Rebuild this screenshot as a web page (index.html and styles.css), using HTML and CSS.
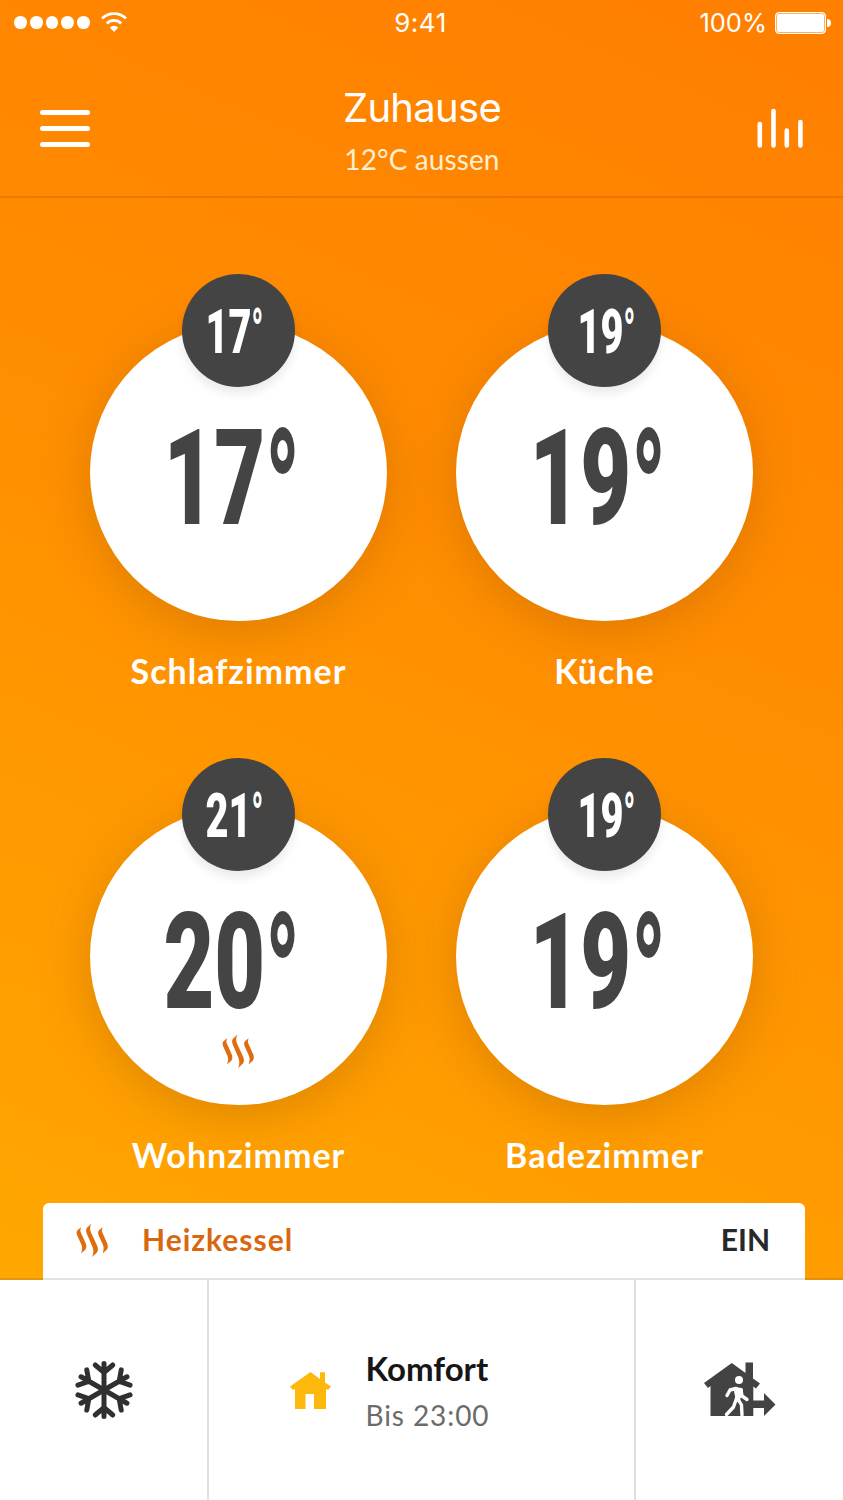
FILE: index.html
```
<!DOCTYPE html>
<html lang="de">

<head>
    <meta charset="UTF-8">
    <meta name="viewport" content="width=device-width, initial-scale=1.0">
    <title>Zuhause</title>
    <link rel="stylesheet" href="styles.css">
</head>

<body>
    <!-- Shared steam icon -->
    <svg width="0" height="0" class="defs">
        <symbol id="steam" viewBox="0 0 33 35">
            <path id="wisp" d="M5 4.300L1.200 7.500Q0 9 1 12L5.500 22Q7 26 5 30.500L9.500 26.500Q11 24.500 10 21L5.500 11Q3.500 7.500 5 4.300Z" />
            <path d="M15.500 .5L10.700 5Q9.300 7 10.500 10L16.500 24Q18.300 29 16 34L21 29.500Q22.700 27 21.500 23.500L15 9.500Q13 5 15.500 .5Z" />
            <use href="#wisp" x="21.500" />
        </symbol>
    </svg>

    <div class="app">
        <div class="status-bar">
            <div class="signal">
                <i></i><i></i><i></i><i></i><i></i>
                <svg class="wifi" width="28" height="22" viewBox="0 0 28 22">
                    <path d="M2 7.500A17 17 0 0 1 26 7.500M6.800 12.500A10 10 0 0 1 21.200 12.500" fill="none" stroke="#fff" stroke-width="2.700" />
                    <path d="M14 21L9.800 16.500A6.200 6.200 0 0 1 18.200 16.500Z" fill="#fff" />
                </svg>
            </div>
            <span class="time">9:41</span>
            <div class="battery">
                <span>100%</span>
                <div class="battery-body"></div>
                <div class="battery-tip"></div>
            </div>
        </div>

        <header class="header">
            <div class="menu"><i></i><i></i><i></i></div>
            <div class="title">
                <h1>Zuhause</h1>
                <p>12°C aussen</p>
            </div>
            <svg class="chart" width="48" height="42" viewBox="0 0 48 42">
                <path d="M3.800 16V37.500M17.500 3V37.500M30.800 22.500V37.500M44.400 14V37.500" stroke="#fff" stroke-width="4.600" stroke-linecap="round" />
            </svg>
        </header>

        <main class="rooms">
            <div class="room">
                <div class="dial">
                    <div class="target"><span>17<sup>°</sup></span></div>
                    <div class="temp">17<sup>°</sup></div>
                </div>
                <h2>Schlafzimmer</h2>
            </div>
            <div class="room">
                <div class="dial">
                    <div class="target shifted"><span>19<sup>°</sup></span></div>
                    <div class="temp">19<sup>°</sup></div>
                </div>
                <h2>Küche</h2>
            </div>
            <div class="room">
                <div class="dial">
                    <div class="target"><span>21<sup>°</sup></span></div>
                    <div class="temp">20<sup>°</sup></div>
                    <svg class="steam"><use href="#steam" /></svg>
                </div>
                <h2>Wohnzimmer</h2>
            </div>
            <div class="room">
                <div class="dial">
                    <div class="target shifted"><span>19<sup>°</sup></span></div>
                    <div class="temp">19<sup>°</sup></div>
                </div>
                <h2>Badezimmer</h2>
            </div>
        </main>

        <div class="boiler-wrap">
            <div class="boiler">
                <svg class="steam"><use href="#steam" /></svg>
                <span class="boiler-name">Heizkessel</span>
                <span class="boiler-state">EIN</span>
            </div>
        </div>

        <nav class="modes">
            <div class="mode">
                <svg width="62" height="62" viewBox="-31 -31 62 62" fill="none" stroke="#303030" stroke-width="5" stroke-linecap="round">
                    <g id="arm"><path d="M0 0V-26.500M-8.800 -25L0 -17.500L8.800 -25" /></g>
                    <use href="#arm" transform="rotate(60)" />
                    <use href="#arm" transform="rotate(120)" />
                    <use href="#arm" transform="rotate(180)" />
                    <use href="#arm" transform="rotate(240)" />
                    <use href="#arm" transform="rotate(300)" />
                </svg>
            </div>
            <div class="mode comfort">
                <svg width="41" height="37" viewBox="0 0 41 37" fill="#fdb90b">
                    <path d="M20.500 0L30 7V.3H35V10.500L41 14.500L38 18L36 16.800V37H24V22H15.500V37H5V16.800L3 18L0 14.500Z" />
                </svg>
                <div>
                    <strong>Komfort</strong>
                    <p>Bis 23:00</p>
                </div>
            </div>
            <div class="mode">
                <svg width="72" height="56" viewBox="0 0 72 56">
                    <path d="M27.800 1L41.500 11V.5H49V16.500L56 21.500L52 26.500L49.300 24.500V38.500H60V31L71.500 42.500L60 54V46H49.300V54H6.500V24L4 26L0 21Z" fill="#434343" />
                    <circle cx="35" cy="18" r="4" fill="#fff" />
                    <path d="M31.500 27L37 28L34 38Z" fill="#fff" stroke="#fff" stroke-width="4" stroke-linejoin="round" />
                    <path d="M32 26.500L26 28L23 33.500M37 28L38 34L43 37.500M33 35L29.500 45L22.500 52.500M34 37L37.500 43L38 53" fill="none" stroke="#fff" stroke-width="3.400" stroke-linecap="round" stroke-linejoin="round" />
                </svg>
            </div>
        </nav>
    </div>
</body>

</html>
```
FILE: styles.css
```
* {
    box-sizing: border-box;
    margin: 0;
    padding: 0;
}

body {
    width: 843px;
    font-family: Lato, "Liberation Sans", sans-serif;
    color: #fff;
}

.defs {
    position: absolute;
}

.app {
    height: 1500px;
    display: flex;
    flex-direction: column;
    overflow: hidden;
    background: linear-gradient(204deg, #ff8000 5%, #ff8c00 36%, #ffa600 86%);
}

/* Status bar */
.status-bar {
    height: 45px;
    padding: 0 12px 0 14px;
    display: grid;
    grid-template-columns: 1fr auto 1fr;
    align-items: center;
    font-family: Inter, sans-serif;
}

.signal {
    display: flex;
    align-items: center;
    gap: 3px;
}

.signal i {
    width: 12.800px;
    height: 12.800px;
    border-radius: 50%;
    background: #fff;
}

.wifi {
    margin-left: 7px;
    margin-top: -2px;
}

.time {
    margin-right: 4px;
    font-size: 26px;
    letter-spacing: 0.500px;
}

.battery {
    display: flex;
    align-items: center;
    justify-content: flex-end;
    font-size: 25.500px;
}

.battery-body {
    width: 51px;
    height: 22px;
    margin-left: 8px;
    border: 1.500px solid #fff;
    border-radius: 4px;
    background: #fff;
    box-shadow: inset 0 0 0 1px #ffb15c;
}

.battery-tip {
    width: 4px;
    height: 8px;
    margin-left: 1px;
    border-radius: 0 4px 4px 0;
    background: #fff;
}

/* Header */
.header {
    height: 153px;
    padding: 0 39px 0 40px;
    display: grid;
    grid-template-columns: 1fr auto 1fr;
    border-bottom: 2px solid rgba(130, 70, 0, 0.200);
}

.menu {
    width: 50px;
    margin-top: 65px;
    display: flex;
    flex-direction: column;
    gap: 11px;
}

.menu i {
    height: 5px;
    border-radius: 3px;
    background: #fff;
}

.title {
    text-align: center;
}

.title h1 {
    margin-top: 38px;
    font: 400 40px/50px Inter, sans-serif;
    letter-spacing: -0.700px;
}

.title p {
    margin-top: 8px;
    font-size: 28px;
    line-height: 36px;
    letter-spacing: 0.100px;
    color: #ffeed0;
}

.chart {
    justify-self: end;
    margin-top: 63px;
}

/* Rooms */
.rooms {
    height: 1005px;
    padding: 126px 90px 0;
    display: grid;
    grid-template-columns: 297px 297px;
    grid-auto-rows: 483.500px;
    column-gap: 69px;
}

.dial {
    position: relative;
    width: 297px;
    height: 297px;
    padding-right: 87px;
    display: flex;
    justify-content: flex-end;
    border-radius: 50%;
    background: #fff;
    box-shadow: 0 10px 50px rgba(150, 80, 0, 0.320);
}

.target {
    position: absolute;
    top: -50px;
    left: 92px;
    width: 113px;
    height: 113px;
    padding-right: 32px;
    display: flex;
    justify-content: flex-end;
    border-radius: 50%;
    background: #444;
    color: #fff;
    font: 900 62px/115px Roboto, sans-serif;
    white-space: nowrap;
    box-shadow: 0 7px 10px rgba(0, 0, 0, 0.080);
}

.target.shifted {
    padding-right: 26px;
}

.target span {
    transform: scaleX(0.640);
    transform-origin: 100% 50%;
}

.temp {
    margin-top: 80px;
    height: 150px;
    color: #444;
    font: 900 133px/150px Roboto, sans-serif;
    white-space: nowrap;
    transform: scaleX(0.660);
    transform-origin: 100% 50%;
}

.target sup,
.temp sup {
    display: inline-block;
    vertical-align: baseline;
    font-size: 1em;
    line-height: 1;
    transform-origin: 50% 22%;
    transform: translateY(0.020em) scaleY(1.300);
}

.target sup {
    font-size: 0.750em;
    transform: translateY(-0.200em) scaleY(1.300);
}

.steam {
    width: 33px;
    height: 35px;
    fill: #df6d10;
}

.dial .steam {
    position: absolute;
    left: 132px;
    top: 226px;
}

.room h2 {
    margin-top: 28px;
    text-align: center;
    font-size: 34px;
    font-weight: 700;
    line-height: 44px;
    letter-spacing: 1px;
}

/* Boiler card */
.boiler-wrap {
    height: 77px;
    padding: 0 38px 0 43px;
    border-bottom: 2px solid rgba(90, 90, 90, 0.180);
}

.boiler {
    height: 77px;
    padding: 0 35px 0 33px;
    display: flex;
    align-items: center;
    border-radius: 6px 6px 0 0;
    border-bottom: 2px solid #e2e2e2;
    background: #fff;
    font-size: 30px;
    font-weight: 700;
    line-height: 36px;
}

.boiler-name {
    margin: 0 0 3px 33px;
    letter-spacing: 1px;
    color: #d9670f;
}

.boiler-state {
    margin: 0 0 3px auto;
    color: #282828;
}

/* Bottom modes */
.modes {
    flex: 1;
    display: grid;
    grid-template-columns: 209px 427px 1fr;
    background: #fff;
}

.mode {
    display: flex;
    align-items: center;
    justify-content: center;
    border-right: 2px solid #e0e0e0;
}

.mode:last-child {
    border-right: 0;
}

.comfort {
    gap: 35px;
    padding-right: 64px;
}

.comfort strong {
    display: block;
    font-size: 33px;
    line-height: 40px;
    color: #161616;
}

.comfort p {
    margin-top: 9px;
    font-size: 28px;
    line-height: 36px;
    letter-spacing: 0.900px;
    color: #6b6b6b;
}
```
